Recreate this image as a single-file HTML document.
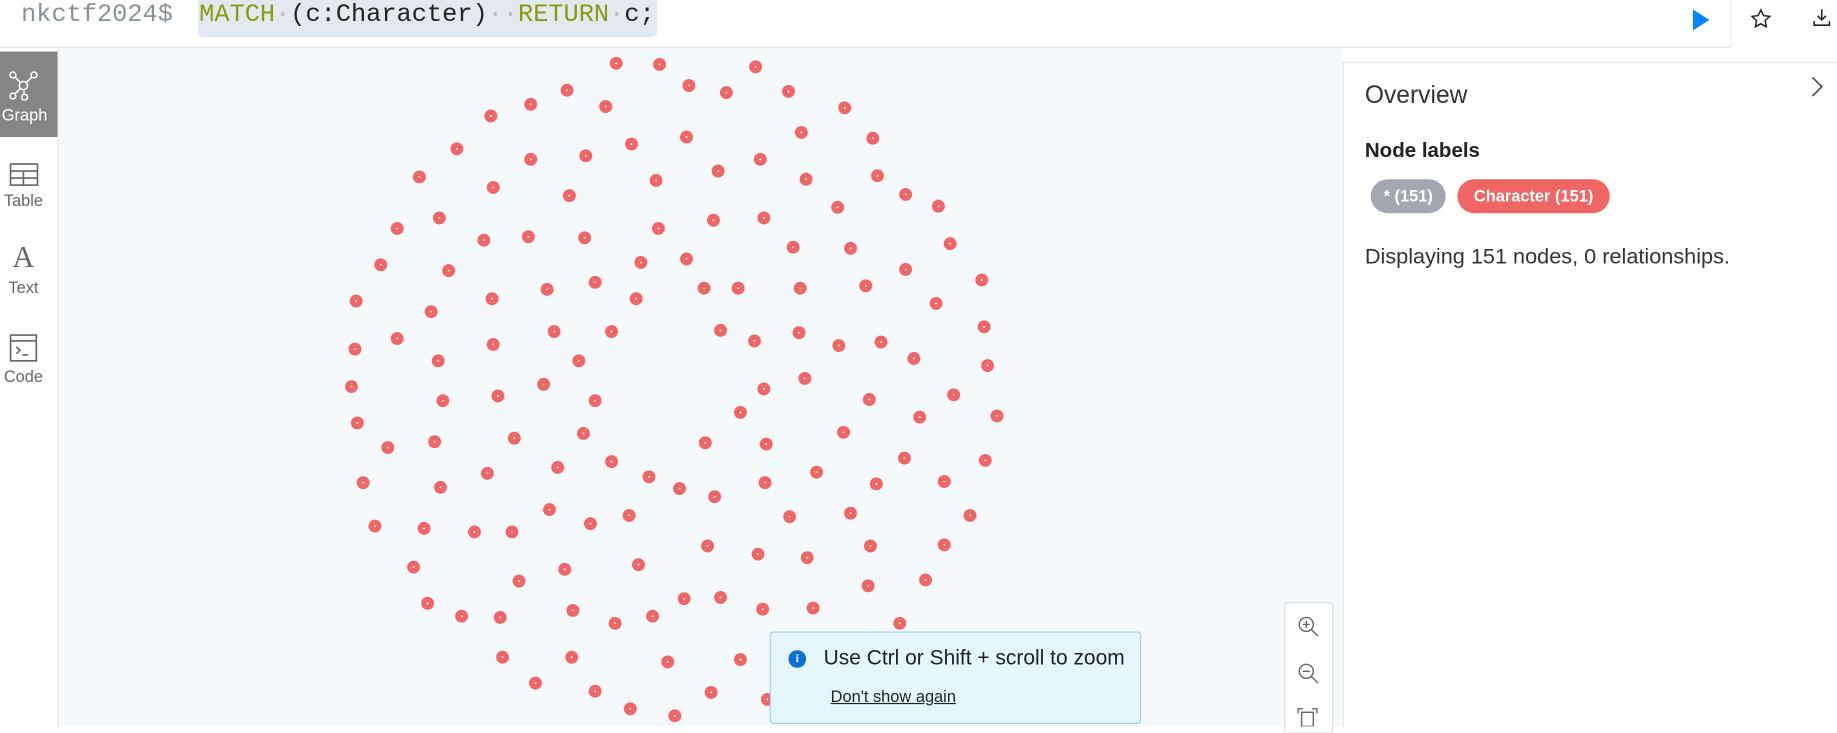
<!DOCTYPE html>
<html><head><meta charset="utf-8"><style>
html,body{margin:0;padding:0;overflow:hidden;width:1837px;height:727px;background:#fff;font-family:"Liberation Sans",sans-serif}
#w{position:absolute;left:0;top:0;width:1568px;height:620px;transform:scale(1.17156);transform-origin:0 0;background:#fff}
.a{position:absolute}
</style></head><body><div id="w">
<div class="a" style="left:0;top:0;width:1477px;height:40px;border-bottom:1px solid #dfe5ec;background:#fff"></div>
<div class="a" style="left:1477px;top:0;width:91px;height:40px;border-left:1px solid #e6e9ee;background:#fff"></div>
<div class="a" style="left:18px;top:1px;font:21.6px 'Liberation Mono',monospace;color:#8a9299">nkctf2024$</div>
<div class="a" style="left:169px;top:0;width:392px;height:32px;background:#e4e9f0;border-radius:0 0 5px 5px"></div>
<div class="a" style="left:170px;top:1px;font:21.6px 'Liberation Mono',monospace;color:#222;white-space:pre"><span style="color:#8a9a10">MATCH</span><span style="color:#bbb">·</span>(c:Character)<span style="color:#bbb">··</span><span style="color:#8a9a10">RETURN</span><span style="color:#bbb">·</span>c;</div>
<svg class="a" style="left:1442px;top:7px" width="20" height="20"><path d="M3 1 L17 10 L3 19Z" fill="#0b84ff"/></svg>
<svg class="a" style="left:1494px;top:7px" width="18" height="18" fill="none" stroke="#222" stroke-width="1.3"><path d="M9 1.5l2.3 4.8 5.2.7-3.8 3.6.9 5.2L9 13.3 4.4 15.8l.9-5.2L1.5 7l5.2-.7z"/></svg>
<svg class="a" style="left:1547px;top:7px" width="16" height="16" fill="none" stroke="#222" stroke-width="1.3"><path d="M8 1v9M4.5 6.5L8 10l3.5-3.5M1.5 11v3.5h13V11"/></svg>
<div class="a" style="left:0;top:41px;width:49px;height:579px;background:#fff;border-right:1px solid #e2e6eb"></div>
<div class="a" style="left:0;top:44px;width:49px;height:73px;background:#858585"></div>
<svg class="a" style="left:7px;top:60px" width="26" height="26" fill="none" stroke="#fff" stroke-width="1.3"><circle cx="13" cy="13" r="3.5"/><circle cx="4" cy="4" r="2.5"/><circle cx="22" cy="4" r="2.5"/><circle cx="4" cy="22" r="2.5"/><circle cx="14" cy="23" r="2.5"/><path d="M6 6l4.5 4.5M20 6l-4.5 4.5M6 20l4.5-4.5M13.5 16.5v4"/></svg>
<div class="a" style="left:0;top:90px;width:42px;text-align:center;color:#fff;font-size:14px">Graph</div>
<svg class="a" style="left:8px;top:139px" width="25" height="20" fill="none" stroke="#666" stroke-width="1.4"><rect x="1" y="1" width="23" height="18"/><path d="M1 7h23M1 13h23M12 7v12"/></svg>
<div class="a" style="left:0;top:163px;width:40px;text-align:center;color:#666;font-size:14px">Table</div>
<div class="a" style="left:0;top:205px;width:40px;text-align:center;color:#666;font:26px 'Liberation Serif',serif">A</div>
<div class="a" style="left:0;top:237px;width:40px;text-align:center;color:#666;font-size:14px">Text</div>
<svg class="a" style="left:8px;top:285px" width="24" height="24" fill="none" stroke="#666" stroke-width="1.4"><rect x="1" y="1" width="22" height="22"/><path d="M1 6h22M6 11l3 3-3 3M11 18h5"/></svg>
<div class="a" style="left:0;top:313px;width:40px;text-align:center;color:#666;font-size:14px">Code</div>
<div class="a" style="left:50px;top:41px;width:1096px;height:579px;background:#f6f9fc"></div>
<svg class="a" style="left:0;top:0" width="1146" height="620" id="g"></svg>
<div class="a" style="left:1096px;top:514px;width:40px;height:110px;background:#fff;border:1px solid #dde2e8;border-radius:3px"></div>
<svg class="a" style="left:1107px;top:525px" width="20" height="20" fill="none" stroke="#666" stroke-width="1.2"><circle cx="8" cy="8" r="6"/><path d="M12.5 12.5L18 18M5 8h6M8 5v6"/></svg>
<svg class="a" style="left:1107px;top:565px" width="20" height="20" fill="none" stroke="#666" stroke-width="1.2"><circle cx="8" cy="8" r="6"/><path d="M12.5 12.5L18 18M5 8h6"/></svg>
<svg class="a" style="left:1107px;top:604px" width="20" height="16" fill="none" stroke="#666" stroke-width="1.2"><rect x="4" y="4" width="10" height="12"/><path d="M1 5V1h4M13 1h4v4"/></svg>
<div class="a" style="left:657px;top:539px;width:315px;height:77px;background:#e5f6fd;border:1px solid #9fcfe6;border-radius:3px"></div>
<div class="a" style="left:673px;top:555px;width:15px;height:15px;border-radius:50%;background:#0a6fd6;color:#fff;font:bold 10px 'Liberation Serif',serif;text-align:center;line-height:15px">i</div>
<div class="a" style="left:703px;top:551px;font-size:17.9px;color:#222">Use Ctrl or Shift + scroll to zoom</div>
<div class="a" style="left:709px;top:586px;font-size:14px;color:#222;text-decoration:underline">Don't show again</div>
<div class="a" style="left:1146px;top:53px;width:422px;height:567px;background:#fff;border-left:1px solid #e2e6eb;border-top:1px solid #e2e6eb"></div>
<svg class="a" style="left:1545px;top:65px" width="12" height="18" fill="none" stroke="#444" stroke-width="1.3"><path d="M2 1l8 8-8 8"/></svg>
<div class="a" style="left:1165px;top:70px;font-size:21px;color:#333">Overview</div>
<div class="a" style="left:1165px;top:118px;font-size:17.5px;font-weight:bold;color:#222">Node labels</div>
<div class="a" style="left:1170px;top:153px;width:64px;height:29px;border-radius:15px;background:#a3a8b0;color:#fff;font-weight:bold;font-size:14px;line-height:29px;text-align:center">* (151)</div>
<div class="a" style="left:1244px;top:153px;width:130px;height:29px;border-radius:15px;background:#f06665;color:#fff;font-weight:bold;font-size:14px;line-height:29px;text-align:center">Character (151)</div>
<div class="a" style="left:1165px;top:208px;font-size:18.5px;color:#333">Displaying 151 nodes, 0 relationships.</div>
</div>
<script>
var p=[526,54,563,55,645,57,588,73,620,79,673,78,484,77,453,89,517,91,721,92,419,99,684,113,745,118,586,117,539,123,390,127,453,136,500,133,649,136,613,146,688,153,749,150,358,151,560,154,421,160,486,167,773,166,801,176,715,177,375,186,339,195,609,188,652,186,562,195,451,202,413,205,499,203,811,208,677,211,726,212,325,226,547,224,586,221,383,231,773,230,838,239,304,257,467,247,508,241,601,246,630,246,683,246,739,244,420,255,543,255,799,259,368,266,840,279,615,282,473,283,522,283,682,284,644,291,339,289,303,298,421,294,716,295,752,292,374,308,494,308,843,312,780,306,300,330,464,328,425,338,378,342,508,342,687,323,652,332,814,337,742,341,632,352,305,361,785,356,851,355,498,370,439,374,371,377,331,382,602,378,654,379,720,369,522,394,772,391,841,393,476,399,416,404,554,407,697,403,310,412,376,416,580,417,610,424,653,412,748,413,806,411,469,435,537,440,504,447,674,441,726,438,828,440,320,449,362,451,405,454,437,454,604,466,743,466,806,465,647,473,689,476,353,484,482,486,545,482,443,496,741,500,790,495,584,511,615,510,365,515,489,521,651,520,694,519,557,526,525,532,394,526,427,527,768,532,429,561,488,561,570,565,632,563,457,583,508,590,607,591,655,597,538,605,576,611];
var s='';for(var i=0;i<p.length;i+=2){s+='<circle cx="'+p[i]+'" cy="'+p[i+1]+'" r="5.5" fill="#f06667"/><circle cx="'+p[i]+'" cy="'+p[i+1]+'" r="0.8" fill="#fff"/>';}
document.getElementById('g').innerHTML=s;
</script>
</body></html>
